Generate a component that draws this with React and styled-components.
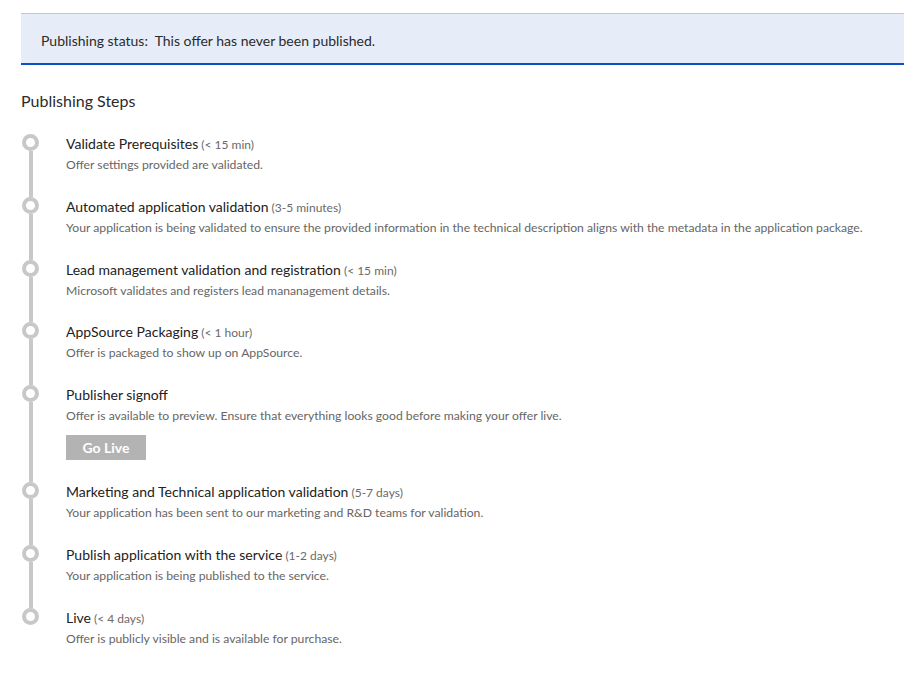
import React from "react";
import styled, { createGlobalStyle } from "styled-components";

const GlobalStyle = createGlobalStyle`
  html, body {
    margin: 0;
    padding: 0;
    background: #ffffff;
  }
  body {
    font-family: "Lato", "Liberation Sans", sans-serif;
    color: #333333;
  }
`;

const Page = styled.div`
  padding: 13px 0 0 21px;
`;

const StatusBanner = styled.div`
  background: #e7edf8;
  border-top: 1px solid #c8c8c8;
  border-bottom: 2px solid #0b50c7;
  padding: 17px 20px 12px;
  font-size: 14px;
  line-height: 20px;
  color: #2b2b2b;
`;

const SectionTitle = styled.h2`
  margin: 26px 0 23px;
  font-size: 16px;
  font-weight: 400;
  line-height: 20px;
  color: #2b2b2b;
`;

const StepList = styled.ol`
  list-style: none;
  margin: 0;
  padding: 0;
`;

const Step = styled.li`
  display: grid;
  grid-template-columns: 19px 1fr;
  column-gap: 26px;
`;

const Marker = styled.div`
  display: flex;
  flex-direction: column;
  align-items: center;
`;

const Circle = styled.span`
  box-sizing: border-box;
  width: 17px;
  height: 17px;
  border-radius: 50%;
  border: 4px solid #c8c8c8;
  background: #ffffff;
  flex: none;
`;

const Connector = styled.span`
  width: 4px;
  flex: 1;
  background: #c8c8c8;
  visibility: ${(p) => (p.$hidden ? "hidden" : "visible")};
`;

const StepBody = styled.div`
  padding-bottom: 23.8px;
`;

const StepTitle = styled.div`
  font-size: 14px;
  line-height: 20px;
  color: #222222;
`;

const Duration = styled.span`
  font-size: 12px;
  line-height: 1;
  color: #6a6a6a;
`;

const StepText = styled.div`
  margin-top: 3px;
  font-size: 12.2px;
  line-height: 16px;
  color: #666666;
`;

const GoLiveButton = styled.button`
  display: block;
  margin: 11px 0 -2px;
  width: 80px;
  height: 25px;
  padding: 0;
  border: none;
  background: #b3b3b3;
  color: #ffffff;
  font-family: "Lato", "Liberation Sans", sans-serif;
  font-size: 14px;
  font-weight: 700;
  cursor: default;
`;

const steps = [
  {
    title: "Validate Prerequisites",
    time: "(< 15 min)",
    text: "Offer settings provided are validated.",
  },
  {
    title: "Automated application validation",
    time: "(3-5 minutes)",
    text: "Your application is being validated to ensure the provided information in the technical description aligns with the metadata in the application package.",
  },
  {
    title: "Lead management validation and registration",
    time: "(< 15 min)",
    text: "Microsoft validates and registers lead mananagement details.",
  },
  {
    title: "AppSource Packaging",
    time: "(< 1 hour)",
    text: "Offer is packaged to show up on AppSource.",
  },
  {
    title: "Publisher signoff",
    time: null,
    text: "Offer is available to preview. Ensure that everything looks good before making your offer live.",
    action: "Go Live",
  },
  {
    title: "Marketing and Technical application validation",
    time: "(5-7 days)",
    text: "Your application has been sent to our marketing and R&D teams for validation.",
  },
  {
    title: "Publish application with the service",
    time: "(1-2 days)",
    text: "Your application is being published to the service.",
  },
  {
    title: "Live",
    time: "(< 4 days)",
    text: "Offer is publicly visible and is available for purchase.",
  },
];

export default function App() {
  return (
    <>
      <GlobalStyle />
      <Page>
        <StatusBanner>Publishing status:&nbsp; This offer has never been published.</StatusBanner>
        <SectionTitle>Publishing Steps</SectionTitle>
        <StepList>
          {steps.map((s, i) => (
            <Step key={s.title}>
              <Marker>
                <Circle />
                <Connector $hidden={i === steps.length - 1} />
              </Marker>
              <StepBody>
                <StepTitle>
                  {s.title}
                  {s.time && <Duration> {s.time}</Duration>}
                </StepTitle>
                <StepText>{s.text}</StepText>
                {s.action && <GoLiveButton type="button">{s.action}</GoLiveButton>}
              </StepBody>
            </Step>
          ))}
        </StepList>
      </Page>
    </>
  );
}
